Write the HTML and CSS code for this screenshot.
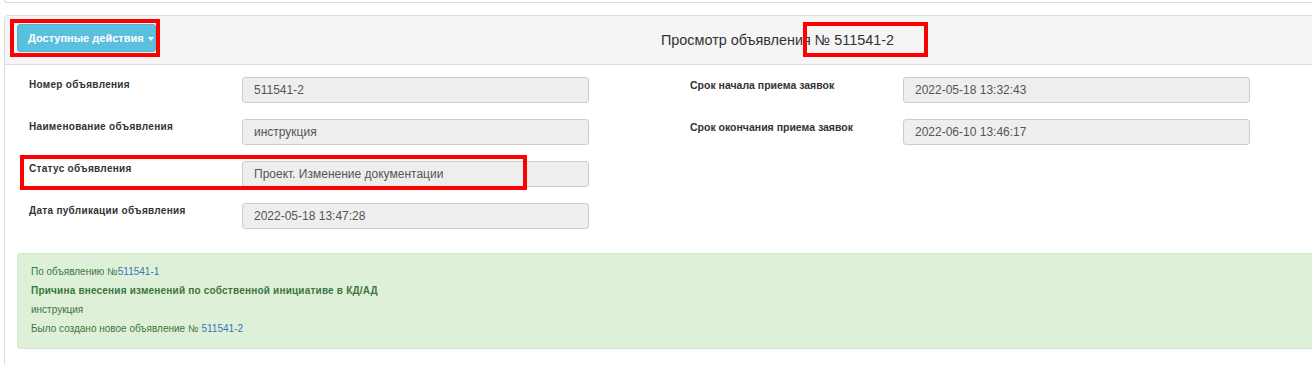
FILE: index.html
```html
<!DOCTYPE html>
<html lang="ru">
<head>
    <meta charset="UTF-8">
    <title>Просмотр объявления</title>
    <link rel="stylesheet" href="styles.css">
</head>
<body>
    <div class="page">
        <div class="prev-panel"></div>

        <div class="panel">
            <!-- Heading -->
            <div class="panel-heading">
                <button class="btn-info">Доступные действия <span class="caret"></span></button>
                <h3 class="panel-title">Просмотр объявления № 511541-2</h3>
            </div>

            <!-- Body -->
            <div class="panel-body">
                <div class="fields">
                    <div class="field-col">
                        <div class="field">
                            <label>Номер объявления</label>
                            <div class="input">511541-2</div>
                        </div>
                        <div class="field">
                            <label>Наименование объявления</label>
                            <div class="input">инструкция</div>
                        </div>
                        <div class="field">
                            <label>Статус объявления</label>
                            <div class="input">Проект. Изменение документации</div>
                        </div>
                        <div class="field">
                            <label>Дата публикации объявления</label>
                            <div class="input">2022-05-18 13:47:28</div>
                        </div>
                    </div>
                    <div class="field-col">
                        <div class="field">
                            <label class="light">Срок начала приема заявок</label>
                            <div class="input">2022-05-18 13:32:43</div>
                        </div>
                        <div class="field">
                            <label class="light">Срок окончания приема заявок</label>
                            <div class="input">2022-06-10 13:46:17</div>
                        </div>
                    </div>
                </div>

                <div class="alert-success">
                    <p>По объявлению №<a href="#">511541-1</a></p>
                    <p><b>Причина внесения изменений по собственной инициативе в КД/АД</b></p>
                    <p>инструкция</p>
                    <p>Было создано новое объявление № <a href="#">511541-2</a></p>
                </div>
            </div>

            <!-- Red highlight marks -->
            <span class="mark mark-btn"></span>
            <span class="mark mark-title"></span>
            <span class="mark mark-status"></span>
        </div>
    </div>
</body>
</html>
```

FILE: styles.css
```css
* {
    margin: 0;
    padding: 0;
    box-sizing: border-box;
}

body {
    font-family: "Liberation Sans", Arial, sans-serif;
    font-size: 12px;
    color: #333;
    background: #fff;
    overflow: hidden;
}

.page {
    padding-left: 4px;
}

/* end of previous panel */
.prev-panel {
    height: 3px;
    width: 1324px;
    border: 1px solid #ddd;
    border-top: none;
    border-radius: 0 0 4px 4px;
    margin-bottom: 12px;
}

.panel {
    position: relative;
    width: 1324px;
    border: 1px solid #ddd;
    border-radius: 4px;
    min-height: 400px;
}

.panel-heading {
    display: flex;
    align-items: center;
    height: 49px;
    padding: 0 12px;
    background: #f5f5f5;
    border-bottom: 1px solid #ddd;
    border-radius: 3px 3px 0 0;
}

.btn-info {
    height: 28px;
    width: 139px;
    padding: 0 10px;
    margin-top: -5px;
    background: #5bc0de;
    border: 1px solid #46b8da;
    border-radius: 3px;
    color: #fff;
    font-family: inherit;
    font-size: 11px;
    font-weight: bold;
    text-align: left;
    white-space: nowrap;
}

.caret {
    display: inline-block;
    width: 0;
    height: 0;
    margin-left: 1px;
    vertical-align: middle;
    border-top: 4px solid #fff;
    border-left: 3px solid transparent;
    border-right: 3px solid transparent;
}

.panel-title {
    margin-left: 505px;
    font-size: 14.4px;
    font-weight: normal;
    color: #333;
}

.panel-body {
    padding-top: 12px;
}

.fields {
    display: flex;
}

.field-col {
    flex: 0 0 661px;
    padding-left: 24px;
}

.field {
    display: flex;
    align-items: flex-start;
    margin-bottom: 16px;
}

.field label {
    flex: 0 0 213px;
    padding-top: 1px;
    font-size: 10px;
    line-height: 14px;
    font-weight: bold;
    letter-spacing: 0.3px;
    color: #333;
}

.field label.light {
    font-size: 10.5px;
    letter-spacing: 0;
}

.input {
    width: 347px;
    height: 26px;
    padding: 0 11px;
    line-height: 24px;
    background: #eee;
    border: 1px solid #ccc;
    border-radius: 3px;
    color: #555;
    font-size: 12px;
}

/* Alert */
.alert-success {
    margin: 8px 12px 0;
    padding: 8px 13px 10px;
    background: #dff0d8;
    border: 1px solid #d6e9c6;
    border-radius: 3px;
    color: #3c763d;
    font-size: 10px;
    line-height: 19px;
}

.alert-success b {
    letter-spacing: 0.2px;
}

.alert-success a {
    color: #337ab7;
    text-decoration: none;
}

/* Red annotation boxes */
.mark {
    position: absolute;
    border: 4px solid #f00;
}

.mark-btn {
    left: 5px;
    top: 3px;
    width: 150px;
    height: 38px;
}

.mark-title {
    left: 798px;
    top: 6px;
    width: 125px;
    height: 35px;
}

.mark-status {
    left: 15px;
    top: 139px;
    width: 507px;
    height: 35px;
}
```
